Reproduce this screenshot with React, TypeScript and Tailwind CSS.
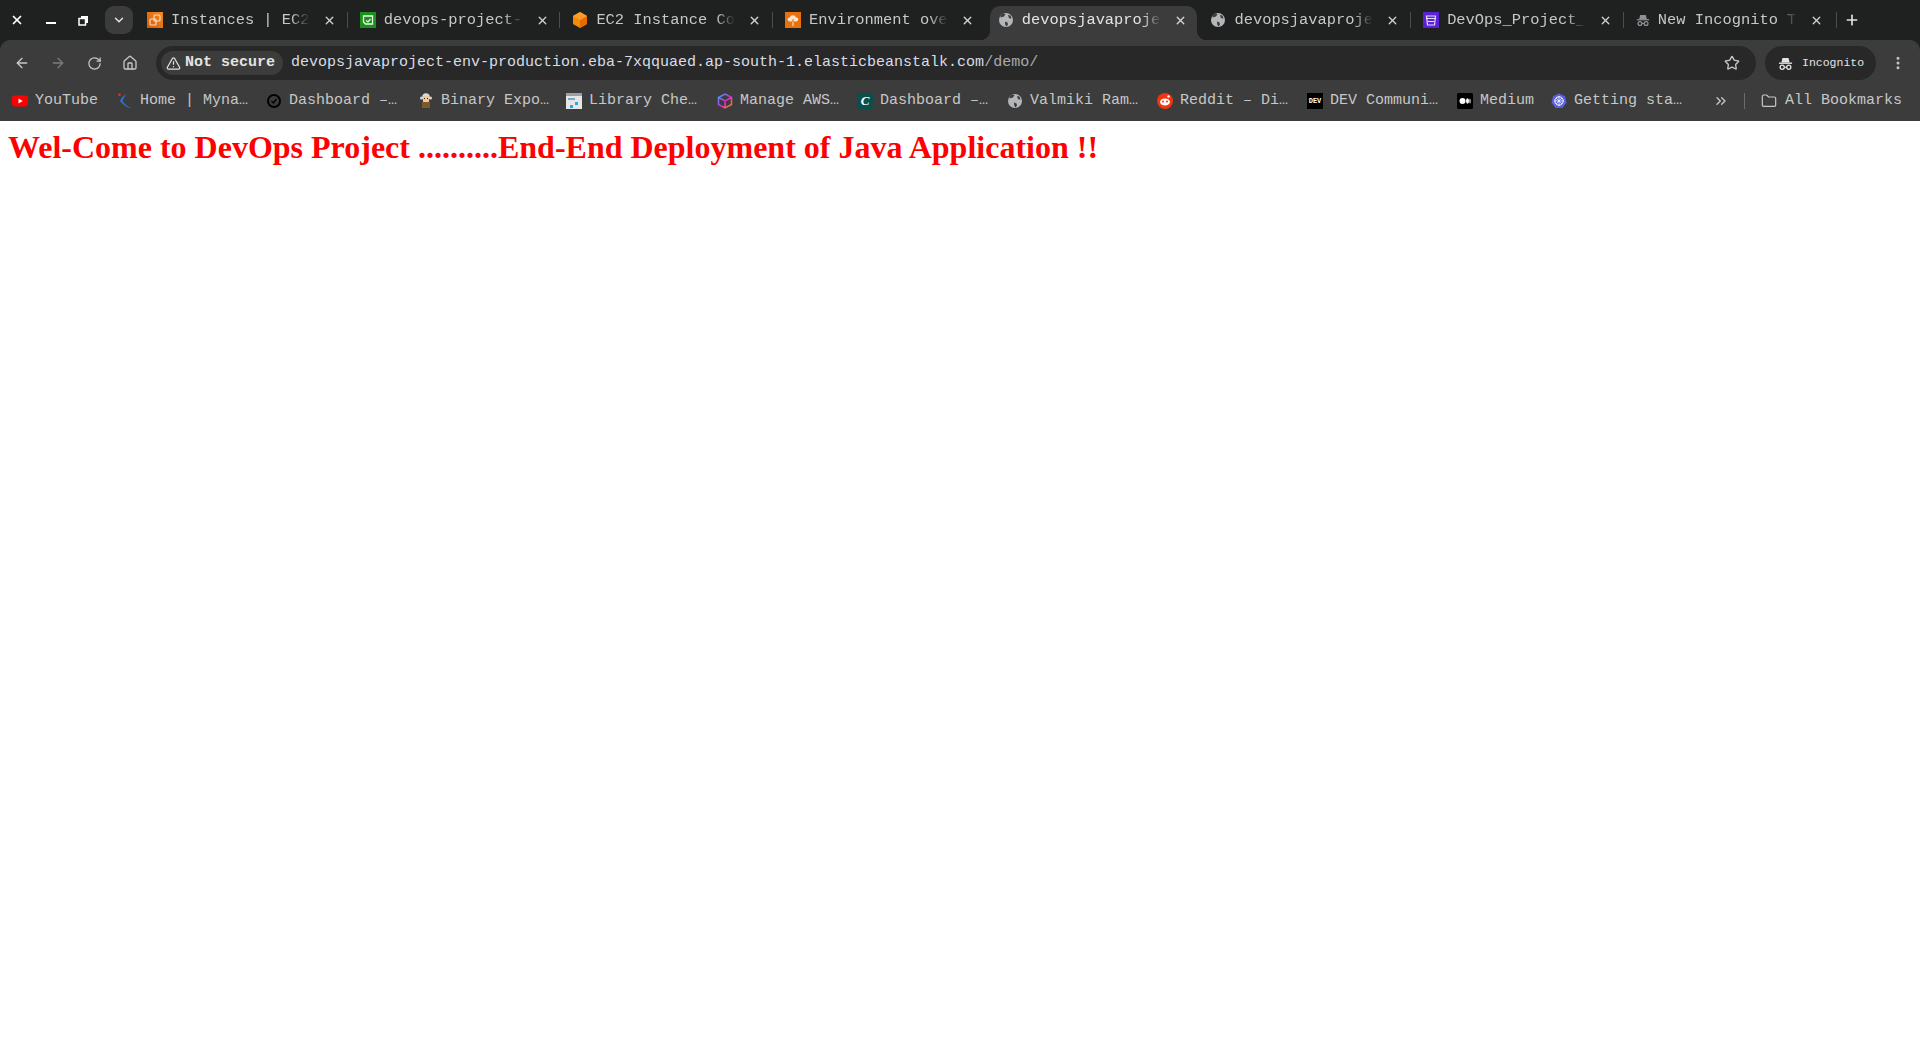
import { ArrowLeft, ArrowRight, ChevronDown, ChevronsRight, EllipsisVertical, Folder, Home, Plus, RotateCw, Star, TriangleAlert, X } from "lucide-react";
import type { ReactNode } from "react";

function IncognitoIcon({ size = 16, color = "#c7c7c7" }: { size?: number; color?: string }) {
  return (
    <svg width={size} height={size} viewBox="0 0 16 16" fill="none" className="shrink-0">
      <path d="M3.6 7 4.8 2.2h6.4L12.4 7z" fill={color} />
      <rect x="1" y="7" width="14" height="1.4" fill={color} />
      <circle cx="4.5" cy="12" r="2.2" stroke={color} strokeWidth="1.4" />
      <circle cx="11.5" cy="12" r="2.2" stroke={color} strokeWidth="1.4" />
      <path d="M6.7 12h2.6" stroke={color} strokeWidth="1.2" />
    </svg>
  );
}

function GlobeFav() {
  return (
    <svg width="16" height="16" viewBox="0 0 16 16" className="shrink-0">
      <circle cx="8" cy="8" r="7" fill="#b4b7ba" />
      <path d="M2.5 5.500 6 4.500 7.500 2 5 1.600 2.500 3.500zM7 9.500l2.500 1 .5 2-1.500 2-1.300-2zM10 3l2.500.5 1 3-2.500-.2z" fill="#3c3c3c" />
    </svg>
  );
}

const ec2 = (
  <svg width="16" height="16" viewBox="0 0 16 16" className="shrink-0">
    <defs>
      <linearGradient id="ec2Grad" x1="0" y1="1" x2="1" y2="0">
        <stop offset="0" stopColor="#d45b07" />
        <stop offset="1" stopColor="#f58a1f" />
      </linearGradient>
    </defs>
    <rect width="16" height="16" fill="url(#ec2Grad)" />
    <rect x="7" y="3" width="6" height="6" rx="1" fill="none" stroke="#f9dcc0" strokeWidth="1.2" />
    <rect x="3" y="7" width="6" height="6" rx="1" fill="none" stroke="#f9dcc0" strokeWidth="1.2" />
  </svg>
);
const codebuild = (
  <svg width="16" height="16" viewBox="0 0 16 16" className="shrink-0">
    <rect width="16" height="16" fill="#1d8f1d" />
    <path d="M3.500 4h9v8h-7l-2-2z" fill="none" stroke="#e8f7e8" strokeWidth="1.3" />
    <path d="M6 8.500 8 10l2.500-3" fill="none" stroke="#e8f7e8" strokeWidth="1.2" />
  </svg>
);
const cube = (
  <svg width="16" height="16" viewBox="0 0 16 16" className="shrink-0">
    <path d="M8 0 15 4v8l-7 4-7-4V4z" fill="#f58a07" />
    <path d="M8 8 15 4v8l-7 4z" fill="#e66a00" />
    <path d="M8 0 15 4 8 8 1 4z" fill="#fb9d2a" />
  </svg>
);
const beanstalk = (
  <svg width="16" height="16" viewBox="0 0 16 16" className="shrink-0">
    <rect width="16" height="16" fill="#e8710f" />
    <path d="M4.500 9.500a2 2 0 0 1 .3-4 3.300 3.300 0 0 1 6.300 0 2 2 0 0 1 .3 4z" fill="#fbe3cc" />
    <path d="M8 7v6M6 10l2 2 2-2" fill="none" stroke="#e8710f" strokeWidth="1.1" />
    <path d="M8 10v4" stroke="#fbe3cc" strokeWidth="1.1" />
  </svg>
);
const s3 = (
  <svg width="16" height="16" viewBox="0 0 16 16" className="shrink-0">
    <rect width="16" height="16" fill="#5a21d6" />
    <path d="M3.500 4h9l-1 9h-7z" fill="none" stroke="#e6dcfb" strokeWidth="1.2" />
    <path d="M3 6.500h10M5 9.500h6" stroke="#e6dcfb" strokeWidth="1.2" />
  </svg>
);

const tabs: { icon: ReactNode; title: string; active?: boolean; noSep?: boolean }[] = [
  { icon: ec2, title: "Instances | EC2 | ap-south-1" },
  { icon: codebuild, title: "devops-project-cicd" },
  { icon: cube, title: "EC2 Instance Connect" },
  { icon: beanstalk, title: "Environment overview", noSep: true },
  { icon: <GlobeFav />, title: "devopsjavaproject-env", active: true, noSep: true },
  { icon: <GlobeFav />, title: "devopsjavaproject-env" },
  { icon: s3, title: "DevOps_Project_bucket" },
  { icon: <IncognitoIcon size={14} color="#8f9194" />, title: "New Incognito Tab" },
];

const bookmarks: { icon: ReactNode; label: string; width: string }[] = [
  {
    icon: (
      <svg width="16" height="16" viewBox="0 0 16 16" className="shrink-0">
        <rect y="2.500" width="16" height="11" rx="3" fill="#f00" />
        <path d="M6.500 5.600 10.700 8l-4.200 2.400z" fill="#fff" />
      </svg>
    ),
    label: "YouTube",
    width: "w-[105px]",
  },
  {
    icon: (
      <svg width="16" height="16" viewBox="0 0 16 16" className="shrink-0">
        <circle cx="2.500" cy="1.800" r="1.300" fill="#e03131" />
        <path d="M9.500 .5C6 3 4 5.500 3 8c2.500 3.500 6.500 6.500 12 7.500-5-2.500-8-4.500-9.500-7.500C6.500 5.500 8 3 9.500 .5z" fill="#2f6fd0" />
      </svg>
    ),
    label: "Home | Myna…",
    width: "w-[149px]",
  },
  {
    icon: (
      <svg width="16" height="16" viewBox="0 0 16 16" className="shrink-0">
        <circle cx="8" cy="8" r="7" fill="#000" />
        <circle cx="8" cy="8" r="5" fill="#3c3c3c" />
        <path d="M5.500 8 7.500 10 10.500 6" fill="none" stroke="#000" strokeWidth="1.300" />
      </svg>
    ),
    label: "Dashboard –…",
    width: "w-[152px]",
  },
  {
    icon: (
      <svg width="16" height="16" viewBox="0 0 16 16" className="shrink-0">
        <circle cx="8" cy="4" r="3.800" fill="#d9d9d9" />
        <circle cx="3.500" cy="5" r="1.500" fill="#d9d9d9" />
        <circle cx="12.500" cy="5" r="1.500" fill="#d9d9d9" />
        <rect x="5" y="3" width="6" height="6" fill="#f0c8a0" />
        <rect x="6" y="5" width="1" height="1" fill="#222" />
        <rect x="9" y="5" width="1" height="1" fill="#222" />
        <rect x="4" y="9" width="8" height="6" fill="#7a5a2c" />
      </svg>
    ),
    label: "Binary Expo…",
    width: "w-[148px]",
  },
  {
    icon: (
      <svg width="16" height="16" viewBox="0 0 16 16" className="shrink-0">
        <rect width="16" height="16" fill="#e6e6e6" />
        <rect y="0" width="16" height="3" fill="#9aa0a6" />
        <rect x="2" y="5" width="7" height="2" fill="#7aa7c7" />
        <rect x="9" y="9" width="3" height="3" fill="#26a9e0" />
        <rect x="4" y="12" width="3" height="3" fill="#26a9e0" />
      </svg>
    ),
    label: "Library Che…",
    width: "w-[151px]",
  },
  {
    icon: (
      <svg width="16" height="16" viewBox="0 0 16 16" className="shrink-0">
        <defs>
          <linearGradient id="awsGrad" x1="0" y1="0" x2="1" y2="1">
            <stop offset="0" stopColor="#19b5fe" />
            <stop offset="0.5" stopColor="#d62bd6" />
            <stop offset="1" stopColor="#ff8a00" />
          </linearGradient>
        </defs>
        <path d="M8 1 14.500 4.500v7L8 15l-6.500-3.500v-7zM1.500 4.500 8 8l6.500-3.500M8 8v7" fill="none" stroke="url(#awsGrad)" strokeWidth="1.500" />
      </svg>
    ),
    label: "Manage AWS…",
    width: "w-[140px]",
  },
  {
    icon: (
      <div className="flex h-4 w-4 shrink-0 items-center justify-center rounded-[2px] bg-[#0b4f4a] font-['Liberation_Serif',serif] text-[13px] font-bold italic text-white">
        C
      </div>
    ),
    label: "Dashboard –…",
    width: "w-[150px]",
  },
  { icon: <GlobeFav />, label: "Valmiki Ram…", width: "w-[150px]" },
  {
    icon: (
      <svg width="16" height="16" viewBox="0 0 16 16" className="shrink-0">
        <circle cx="8" cy="8" r="8" fill="#f0350f" />
        <ellipse cx="8" cy="9" rx="5" ry="3.500" fill="#fff" />
        <circle cx="6" cy="8.500" r="1" fill="#f0350f" />
        <circle cx="10" cy="8.500" r="1" fill="#f0350f" />
        <circle cx="11.500" cy="3.500" r="1.200" fill="#fff" />
      </svg>
    ),
    label: "Reddit – Di…",
    width: "w-[150px]",
  },
  {
    icon: (
      <div className="flex h-4 w-4 shrink-0 items-center justify-center bg-black font-['Liberation_Mono',monospace] text-[7px] font-bold leading-none text-white">
        DEV
      </div>
    ),
    label: "DEV Communi…",
    width: "w-[150px]",
  },
  {
    icon: (
      <svg width="16" height="16" viewBox="0 0 16 16" className="shrink-0">
        <rect width="16" height="16" rx="1.500" fill="#000" />
        <circle cx="5.500" cy="8" r="3" fill="#fff" />
        <ellipse cx="10.500" cy="8" rx="1.500" ry="2.800" fill="#fff" />
        <ellipse cx="13" cy="8" rx="0.600" ry="2.500" fill="#fff" />
      </svg>
    ),
    label: "Medium",
    width: "w-[94px]",
  },
  {
    icon: (
      <svg width="16" height="16" viewBox="0 0 16 16" className="shrink-0">
        <path d="M8 .5 14 3.300l1.500 6.400-4.200 5.300H4.700L.5 9.700 2 3.300z" fill="#5a5fe0" />
        <circle cx="8" cy="8" r="4.200" fill="none" stroke="#fff" strokeWidth="1" />
        <path d="M8 3v10M3.500 8h9M5 5l6 6M11 5l-6 6" stroke="#fff" strokeWidth="0.700" />
      </svg>
    ),
    label: "Getting sta…",
    width: "w-[150px]",
  },
];

function Tab({ icon, title, active, noSep }: { icon: ReactNode; title: string; active?: boolean; noSep?: boolean }) {
  return (
    <div
      className={`relative flex h-[34px] shrink-0 items-center pb-[6px] pl-[8px] ${
        active ? "mr-[5.700px] w-[207px] rounded-t-[10px] bg-[#3c3c3c]" : "w-[212.700px]"
      }`}
    >
      {active && (
        <>
          <div className="absolute bottom-0 left-[-10px] h-[10px] w-[10px] bg-[radial-gradient(circle_at_0_0,transparent_10px,#3c3c3c_10.500px)]" />
          <div className="absolute bottom-0 right-[-10px] h-[10px] w-[10px] bg-[radial-gradient(circle_at_100%_0,transparent_10px,#3c3c3c_10.500px)]" />
        </>
      )}
      {icon}
      <div
        className={`ml-2 w-[139px] overflow-hidden whitespace-nowrap pt-[2px] text-[15.400px] [mask-image:linear-gradient(to_right,black_120px,transparent_139px)] ${
          active ? "text-[#e3e3e3]" : "text-[#c7c7c7]"
        }`}
      >
        {title}
      </div>
      <X size={13} strokeWidth={2.500} className="ml-[13px] shrink-0 text-[#d0d0d0]" />
      {!noSep && <div className="absolute right-[4px] top-[6px] h-[16px] w-px bg-[#4a4c4e]" />}
    </div>
  );
}

export default function App() {
  return (
    <div className="flex h-[1052px] flex-col overflow-hidden bg-white font-['Liberation_Mono',monospace]">
      <div className="shrink-0 bg-[#1f2020]">
        {/* tab strip */}
        <div className="flex h-10 items-end">
          <div className="flex h-10 w-[139px] shrink-0 items-center text-white">
            <X size={14} strokeWidth={3} className="ml-[10px]" />
            <div className="ml-[22px] mt-[6px] h-[2px] w-[10px] bg-white" />
            <svg width="11" height="11" viewBox="0 0 11 11" className="ml-[22px]">
              <path d="M3 1h7v7H8V3H3z" fill="#fff" />
              <rect x="1" y="3.500" width="6.500" height="6.500" fill="none" stroke="#fff" strokeWidth="1.500" />
            </svg>
            <div className="ml-[16px] flex h-7 w-7 items-center justify-center rounded-[9px] bg-[#3c3c3c]">
              <ChevronDown size={14} strokeWidth={2.500} className="text-[#e3e3e3]" />
            </div>
          </div>
          <div className="flex h-[34px] items-start">
            {tabs.map((t, i) => (
              <Tab key={i} {...t} />
            ))}
            <Plus size={16} strokeWidth={2.500} className="ml-[3px] mt-[6px] text-[#e3e3e3]" />
          </div>
        </div>

        {/* toolbar */}
        <div className="flex h-[41px] items-center rounded-t-[10px] bg-[#3c3c3c] pt-[5px]">
          <ArrowLeft size={16} strokeWidth={2} className="ml-[14px] text-[#c7c7c7]" />
          <ArrowRight size={16} strokeWidth={2} className="ml-[20px] text-[#7c7c7c]" />
          <RotateCw size={15} strokeWidth={2} className="ml-[21px] text-[#c7c7c7]" />
          <Home size={16} strokeWidth={2} className="ml-[20px] text-[#c7c7c7]" />
          <div className="ml-[18px] flex h-[34px] w-[1600px] items-center rounded-full bg-[#282828] pl-[5px]">
            <div className="flex h-6 w-[122px] shrink-0 items-center rounded-full bg-[#3c3c3c] pl-[5px] text-[15px] font-bold text-[#e3e3e3]">
              <TriangleAlert size={15} strokeWidth={2} className="mr-[4px] shrink-0" />
              <span className="whitespace-nowrap">Not secure</span>
            </div>
            <div className="ml-2 whitespace-nowrap pt-[1px] text-[15px] text-[#d7dde8]">
              devopsjavaproject-env-production.eba-7xqquaed.ap-south-1.elasticbeanstalk.com<span className="text-[#a8abae]">/demo/</span>
            </div>
            <Star size={16} strokeWidth={2} className="ml-auto mr-[16px] text-[#c7c7c7]" />
          </div>
          <div className="ml-[9px] flex h-[34px] w-[111px] items-center rounded-full bg-[#282828] pl-[13px] text-[#e3e3e3]">
            <IncognitoIcon size={15} color="#e3e3e3" />
            <span className="ml-[9px] text-[11.500px]">Incognito</span>
          </div>
          <EllipsisVertical size={16} strokeWidth={2.500} className="ml-[14px] text-[#c7c7c7]" />
        </div>

        {/* bookmarks */}
        <div className="flex h-10 items-center bg-[#3c3c3c] pl-[12px] text-[15px] text-[#c7c7c7]">
          {bookmarks.map((b, i) => (
            <div key={i} className={`flex shrink-0 items-center whitespace-nowrap ${b.width}`}>
              {b.icon}
              <span className="ml-[7px]">{b.label}</span>
            </div>
          ))}
          <ChevronsRight size={16} strokeWidth={2} className="ml-[12px] text-[#c7c7c7]" />
          <div className="ml-[15px] h-[16px] w-px bg-[#6a6a6a]" />
          <Folder size={16} strokeWidth={1.800} className="ml-[16px] text-[#c7c7c7]" />
          <span className="ml-2 whitespace-nowrap">All Bookmarks</span>
        </div>
      </div>

      {/* page */}
      <div className="flex-1 bg-white p-2 font-['Liberation_Serif',serif]">
        <h1 className="text-[32px] font-bold leading-[37px] text-[#ff0000]">
          Wel-Come to DevOps Project ..........End-End Deployment of Java Application !!
        </h1>
      </div>
    </div>
  );
}
